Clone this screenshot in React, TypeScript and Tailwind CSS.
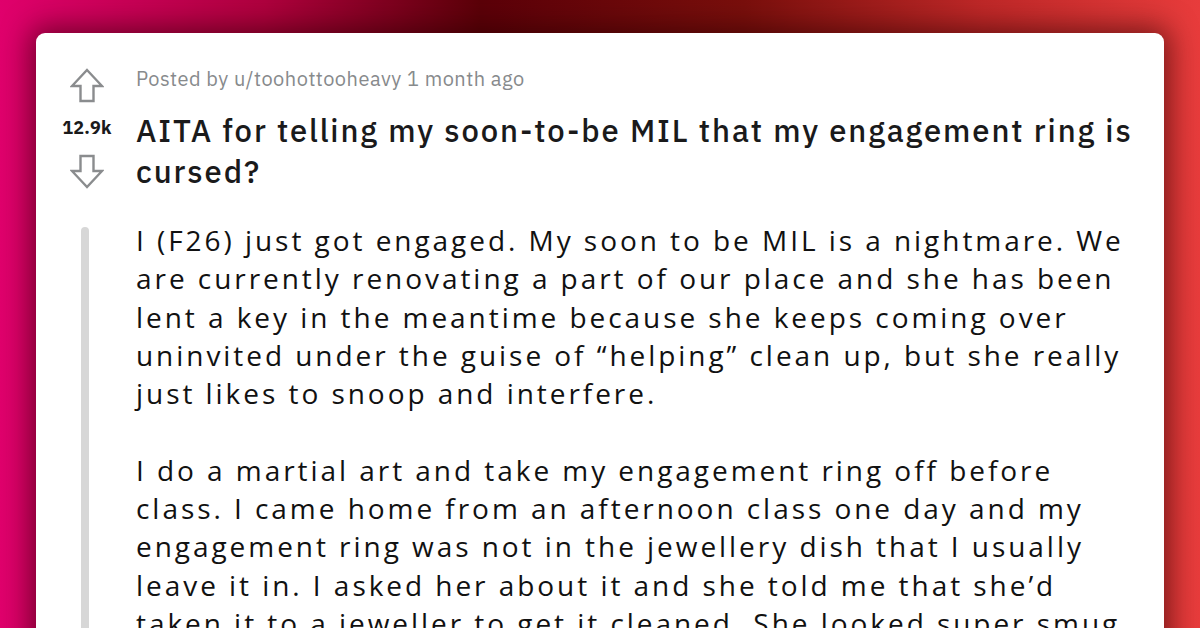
import React from "react";

/** 投票矢印（アウトライン） */
function VoteArrow({ down = false }: { down?: boolean }) {
  return (
    <svg
      width="34"
      height="35"
      viewBox="0 0 34 35"
      className={down ? "rotate-180" : ""}
      fill="none"
      stroke="#8a8c8e"
      strokeWidth="2.4"
      strokeLinejoin="miter"
    >
      <path d="M17 2 L32 18 L23.5 18 L23.5 33 L10.5 33 L10.5 18 L2 18 Z" />
    </svg>
  );
}

const paragraphs = [
  "I (F26) just got engaged. My soon to be MIL is a nightmare. We are currently renovating a part of our place and she has been lent a key in the meantime because she keeps coming over uninvited under the guise of \u201chelping\u201d clean up, but she really just likes to snoop and interfere.",
  "I do a martial art and take my engagement ring off before class. I came home from an afternoon class one day and my engagement ring was not in the jewellery dish that I usually leave it in. I asked her about it and she told me that she\u2019d taken it to a jeweller to get it cleaned. She looked super smug and said it was filthy.",
];

export default function App() {
  return (
    <div className="w-[1200px] h-[628px] overflow-hidden bg-[linear-gradient(90deg,#e0006c_0%,#b0003e_22%,#5c0008_40%,#7a0f0c_62%,#c02828_82%,#e83c3c_100%)] pt-[33px] px-[36px]">
      <div className="bg-white rounded-t-[9px] h-[640px] shadow-[0_0_28px_6px_rgba(40,0,0,0.55)] flex">
        {/* 投票カラム */}
        <div className="w-[100px] shrink-0 flex flex-col items-center pt-[35px]">
          <div className="flex flex-col items-center ml-[2px]">
            <VoteArrow />
            <div className="mt-[14px] text-[18px] leading-[22px] font-bold text-[#1a1a1b] font-['IBM_Plex_Sans','Inter',sans-serif] tracking-[0.2px]">
              12.9k
            </div>
            <div className="mt-[15px]">
              <VoteArrow down />
            </div>
          </div>
          <div className="mt-[38px] ml-[-2px] w-[8px] flex-1 rounded-t-full bg-[#d7d7d7]" />
        </div>

        {/* 本文 */}
        <div className="flex-1 pr-[29px]">
          <div className="mt-[33px] text-[20px] leading-[26px] text-[#878a8c] font-['IBM_Plex_Sans','Noto_Sans',sans-serif] tracking-[0.5px]">
            Posted by u/toohottooheavy 1 month ago
          </div>
          <h1 className="mt-[18px] text-[31px] leading-[41px] font-medium text-[#1a1a1b] font-['IBM_Plex_Sans','Noto_Sans',sans-serif] tracking-[1.9px]">
            AITA for telling my soon-to-be MIL that my engagement ring is cursed?
          </h1>
          <div className="mt-[29px] text-[28px] leading-[38.3px] text-[#111] font-['Open_Sans',sans-serif] tracking-[2.95px] flex flex-col gap-[38.3px]">
            {paragraphs.map((p) => (
              <p key={p.slice(0, 12)}>{p}</p>
            ))}
          </div>
        </div>
      </div>
    </div>
  );
}
